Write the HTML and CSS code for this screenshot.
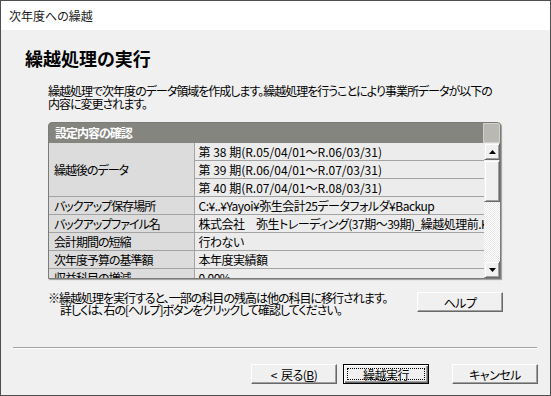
FILE: index.html
```html
<!DOCTYPE html>
<html lang="ja">
<head>
    <meta charset="UTF-8">
    <meta name="viewport" content="width=device-width, initial-scale=1.0">
    <title>次年度への繰越</title>
    <link rel="stylesheet" href="styles.css">
</head>
<body>
    <div class="window">
        <div class="titlebar">次年度への繰越</div>

        <div class="dialog">
            <h1 class="heading">繰越処理の実行</h1>
            <p class="lead">繰越処理で次年度のデータ領域を作成します。繰越処理を行うことにより事業所データが以下の<br>内容に変更されます。</p>

            <!-- Settings panel -->
            <div class="panel">
                <div class="panel-head">
                    <span class="panel-title">設定内容の確認</span>
                    <span class="head-cap"></span>
                </div>
                <div class="panel-body">
                    <div class="grid-wrap">
                        <table class="grid">
                            <colgroup>
                                <col class="col-label">
                                <col>
                            </colgroup>
                            <tr>
                                <th rowspan="3">繰越後のデータ</th>
                                <td class="period">第 38 期(R.05/04/01～R.06/03/31)</td>
                            </tr>
                            <tr><td class="period">第 39 期(R.06/04/01～R.07/03/31)</td></tr>
                            <tr><td class="period">第 40 期(R.07/04/01～R.08/03/31)</td></tr>
                            <tr><th>バックアップ保存場所</th><td>C:¥..¥Yayoi¥弥生会計25データフォルダ¥Backup</td></tr>
                            <tr><th>バックアップファイル名</th><td>株式会社　弥生トレーディング(37期～39期)_繰越処理前.KD25</td></tr>
                            <tr><th>会計期間の短縮</th><td>行わない</td></tr>
                            <tr><th>次年度予算の基準額</th><td>本年度実績額</td></tr>
                            <tr><th>収益科目の増減</th><td>0.00%</td></tr>
                        </table>
                    </div>
                    <div class="scrollbar">
                        <div class="sb-btn">
                            <svg width="7" height="4" viewBox="0 0 7 4"><path d="M3.5 0 L7 4 L0 4 Z" fill="#000"/></svg>
                        </div>
                        <div class="sb-thumb"></div>
                        <div class="sb-track"></div>
                        <div class="sb-btn">
                            <svg width="7" height="4" viewBox="0 0 7 4"><path d="M0 0 L7 0 L3.5 4 Z" fill="#000"/></svg>
                        </div>
                    </div>
                </div>
            </div>

            <!-- Note and help -->
            <div class="note-row">
                <p class="note">※繰越処理を実行すると、一部の科目の残高は他の科目に移行されます。<br><span class="indent">詳しくは、右の[ヘルプ]ボタンをクリックして確認してください。</span></p>
                <button class="btn">ヘルプ</button>
            </div>

            <div class="separator"></div>

            <!-- Wizard buttons -->
            <div class="actions">
                <button class="btn"><span class="back-arrow">&lt;</span>戻る(<u>B</u>)</button>
                <button class="btn btn-default"><span class="focus">繰越実行</span></button>
                <button class="btn btn-cancel">キャンセル</button>
            </div>
        </div>
    </div>
</body>
</html>
```

FILE: styles.css
```css
/* Global Styles */
body {
    margin: 0;
    padding: 0;
    background: #f0f0f0;
    font-family: "Noto Sans CJK JP", "Noto Sans", sans-serif;
    font-feature-settings: "palt";
    letter-spacing: -1px;
    color: #000;
}

/* Window frame */
.window {
    width: 551px;
    height: 396px;
    box-sizing: border-box;
    border: 1px solid #4f4f4f;
    display: flex;
    flex-direction: column;
    background: #f0f0f0;
}

.titlebar {
    height: 29px;
    line-height: 29px;
    padding-left: 8px;
    background: #ffffff;
    font-size: 12px;
    letter-spacing: 0;
    color: #1a1a1a;
}

.dialog {
    flex: 1;
    display: flex;
    flex-direction: column;
}

/* Heading */
.heading {
    margin: 0;
    padding: 19px 0 0 24px;
    font-size: 18px;
    line-height: 18px;
    font-weight: bold;
    letter-spacing: 0;
}

.lead {
    margin: 17px 0 0 47px;
    font-size: 12px;
    line-height: 13px;
}

/* Settings panel */
.panel {
    margin: 12px 0 0 47px;
    width: 453px;
    box-sizing: border-box;
    border: 1px solid #7a7a76;
    border-radius: 4px 4px 0 0;
    box-shadow: 1px 1px 1px rgba(0, 0, 0, 0.35);
    background: #858580;
}

.panel-head {
    height: 20px;
    display: flex;
    align-items: center;
    padding-left: 6px;
    border-radius: 3px 3px 0 0;
    background: #858580;
}

.panel-title {
    flex: 1;
    color: #ffffff;
    font-size: 12px;
    font-weight: bold;
    line-height: 12px;
}

.head-cap {
    width: 15px;
    height: 18px;
    background: #bab8b2;
    border: 1px solid #d2d0ca;
    border-radius: 0 2px 0 0;
}

.panel-body {
    height: 135px;
    display: flex;
    background: #ececec;
}

.grid-wrap {
    flex: 1;
    overflow: hidden;
}

.grid {
    width: 100%;
    table-layout: fixed;
    border-collapse: collapse;
    font-size: 12px;
}

.col-label {
    width: 145px;
}

.grid th,
.grid td {
    height: 17px;
    padding: 0 0 0 4px;
    border-bottom: 1px solid #a3a3a3;
    text-align: left;
    font-weight: normal;
    white-space: nowrap;
    overflow: hidden;
    line-height: 17px;
}

.grid th {
    padding-left: 5px;
    background: #dcdcdc;
    border-right: 1px solid #a3a3a3;
}

.grid td {
    background: #ececec;
    letter-spacing: -0.5px;
}

.grid td.period {
    letter-spacing: 0;
}

/* Scrollbar */
.scrollbar {
    width: 16px;
    display: flex;
    flex-direction: column;
    background: #f4f4f4;
}

.sb-btn,
.sb-thumb {
    box-sizing: border-box;
    border: 1px solid;
    border-color: #f0f0f0 #696969 #696969 #f0f0f0;
    box-shadow: inset 1px 1px 0 #ffffff, inset -1px -1px 0 #a0a0a0;
    background: #f0f0f0;
}

.sb-btn {
    height: 17px;
    display: flex;
    align-items: center;
    justify-content: center;
}

.sb-thumb {
    height: 42px;
}

.sb-track {
    flex: 1;
    background: repeating-conic-gradient(#ffffff 0 25%, #e8e8e8 0 50%) 0 0 / 2px 2px;
}

/* Note and help button */
.note-row {
    margin: 13px 47px 0 47px;
    display: flex;
    align-items: flex-start;
    height: 24px;
}

.note {
    flex: 1;
    margin: 0;
    font-size: 12px;
    line-height: 12px;
    white-space: nowrap;
}

.indent {
    padding-left: 12px;
}

.btn {
    width: 86px;
    height: 20px;
    padding: 0;
    box-sizing: border-box;
    display: flex;
    align-items: center;
    justify-content: center;
    font-family: inherit;
    font-feature-settings: "palt";
    letter-spacing: -0.5px;
    font-size: 12px;
    color: #000;
    background: #f0f0f0;
    border: 1px solid;
    border-color: #ffffff #696969 #696969 #ffffff;
    box-shadow: inset -1px -1px 0 #a0a0a0;
}

.back-arrow {
    margin-right: 4px;
}

.btn-default {
    border: 1px solid #000;
    box-shadow: inset 1px 1px 0 #ffffff, inset -1px -1px 0 #696969, inset -2px -2px 0 #a0a0a0;
}

.focus {
    flex: 1;
    align-self: stretch;
    margin: 3px;
    border: 1px dotted #000;
    display: flex;
    align-items: center;
    justify-content: center;
}

/* Separator */
.separator {
    margin: 31px 13px 0 12px;
    border-top: 1px solid #a0a0a0;
    border-bottom: 1px solid #ffffff;
    height: 0;
}

/* Wizard buttons */
.actions {
    margin: 15px 12px 0 0;
    display: flex;
    justify-content: flex-end;
    gap: 6px;
}

.btn-cancel {
    margin-left: 17px;
}
```
